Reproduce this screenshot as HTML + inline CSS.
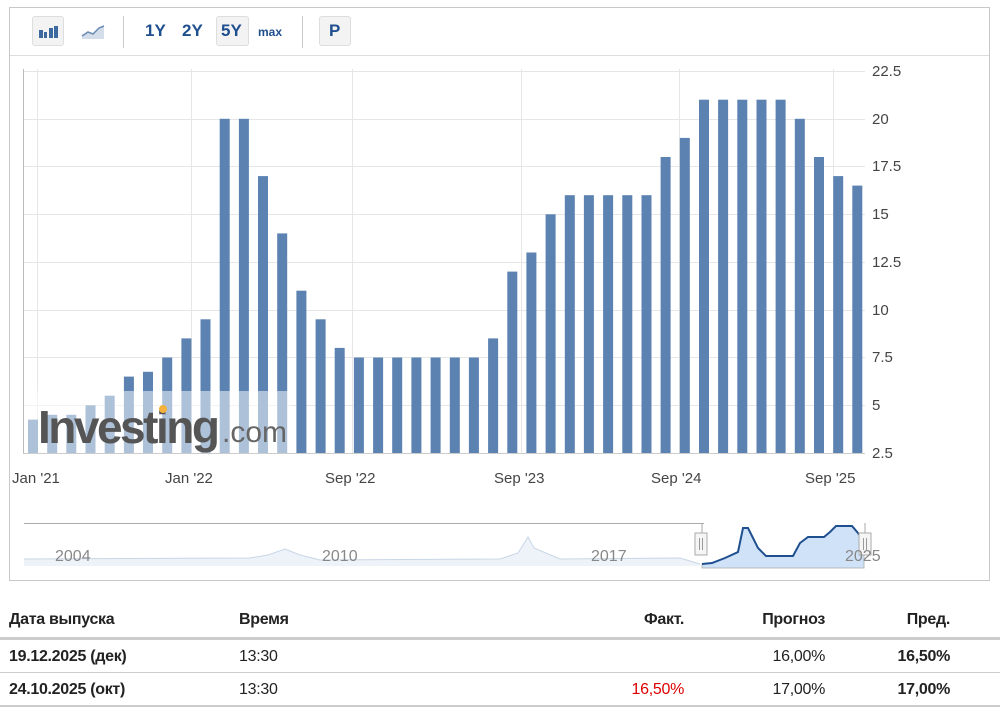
<!DOCTYPE html>
<html><head><meta charset="utf-8"><style>
body{margin:0;background:#fff;font-family:"Liberation Sans",Arial,sans-serif;width:1000px;height:712px;overflow:hidden;position:relative}
.box{position:absolute;left:9px;top:7px;width:981px;height:574px;border:1px solid #c8c8c8;box-sizing:border-box}
.tb{position:absolute;left:0;top:0;width:100%;height:47px;border-bottom:1px solid #ddd}
.btn{position:absolute;top:8px;height:30px;box-sizing:border-box;border:1px solid #ddd;border-radius:3px;background:#f3f3f3}
.t{position:absolute;top:13px;font-weight:bold;color:#1f4f8f;font-size:17px}
.sep{position:absolute;top:8px;width:1px;height:32px;background:#ccc}
.c{position:absolute;font-size:16px;color:#222;white-space:nowrap;letter-spacing:-0.3px}
.r{text-align:right}
.hl{position:absolute;left:0;width:1000px;background:#ccc}
</style></head><body>
<div class="box">
 <div class="tb">
  <div class="btn" style="left:22px;width:32px"></div>
  <svg style="position:absolute;left:27px;top:15px" width="24" height="16"><g fill="#3d6a9e"><rect x="2" y="7" width="4" height="8"/><rect x="7" y="9" width="3" height="6"/><rect x="12" y="5" width="4" height="10"/><rect x="17" y="3" width="4" height="12"/></g></svg>
  <svg style="position:absolute;left:70px;top:14px" width="26" height="18"><path d="M2 14 L8 10 L13 12 L19 6 L24 4 L24 17 L2 17Z" fill="#d3deea"/><path d="M2 14 L8 10 L13 12 L19 6 L24 4" stroke="#6a8cb3" stroke-width="1.5" fill="none"/></svg>
  <div class="sep" style="left:113px"></div>
  <div class="t" style="left:135px">1Y</div>
  <div class="t" style="left:172px">2Y</div>
  <div class="btn" style="left:206px;width:33px"></div>
  <div class="t" style="left:211px">5Y</div>
  <div class="t" style="left:248px;font-size:12px;top:17px">max</div>
  <div class="sep" style="left:292px"></div>
  <div class="btn" style="left:309px;width:32px"></div>
  <div class="t" style="left:319px">P</div>
 </div>
</div>
<svg style="position:absolute;left:0;top:0" width="1000" height="600" font-family="Liberation Sans,Arial,sans-serif">
 <g stroke="#e6e6e6" stroke-width="1">
  <line x1="23" x2="865" y1="71.5" y2="71.5"/><line x1="23" x2="865" y1="119.5" y2="119.5"/><line x1="23" x2="865" y1="166.5" y2="166.5"/><line x1="23" x2="865" y1="214.5" y2="214.5"/><line x1="23" x2="865" y1="262.5" y2="262.5"/><line x1="23" x2="865" y1="310.5" y2="310.5"/><line x1="23" x2="865" y1="357.5" y2="357.5"/><line x1="23" x2="865" y1="405.5" y2="405.5"/>
  <line x1="37.5" x2="37.5" y1="69" y2="453"/><line x1="191.5" x2="191.5" y1="69" y2="453"/><line x1="352.5" x2="352.5" y1="69" y2="453"/><line x1="521.5" x2="521.5" y1="69" y2="453"/><line x1="679.5" x2="679.5" y1="69" y2="453"/><line x1="833.5" x2="833.5" y1="69" y2="453"/>
 </g>
 <line x1="23.5" x2="23.5" y1="69" y2="453" stroke="#bbb"/>
 <line x1="23" x2="865" y1="453.5" y2="453.5" stroke="#ccc"/>
 <g fill="#5b82b1">
<rect x="28" y="419.6" width="10" height="33.4"/><rect x="47.2" y="414.8" width="10" height="38.2"/><rect x="66.3" y="414.8" width="10" height="38.2"/><rect x="85.5" y="405.3" width="10" height="47.7"/><rect x="104.7" y="395.7" width="10" height="57.3"/><rect x="123.9" y="376.6" width="10" height="76.4"/><rect x="143" y="371.8" width="10" height="81.2"/><rect x="162.2" y="357.5" width="10" height="95.5"/><rect x="181.4" y="338.4" width="10" height="114.6"/><rect x="200.5" y="319.3" width="10" height="133.7"/><rect x="219.7" y="118.8" width="10" height="334.2"/><rect x="238.9" y="118.8" width="10" height="334.2"/><rect x="258" y="176.1" width="10" height="276.9"/><rect x="277.2" y="233.4" width="10" height="219.6"/><rect x="296.4" y="290.7" width="10" height="162.3"/><rect x="315.6" y="319.3" width="10" height="133.7"/><rect x="334.7" y="347.9" width="10" height="105.1"/><rect x="353.9" y="357.5" width="10" height="95.5"/><rect x="373.1" y="357.5" width="10" height="95.5"/><rect x="392.2" y="357.5" width="10" height="95.5"/><rect x="411.4" y="357.5" width="10" height="95.5"/><rect x="430.6" y="357.5" width="10" height="95.5"/><rect x="449.8" y="357.5" width="10" height="95.5"/><rect x="468.9" y="357.5" width="10" height="95.5"/><rect x="488.1" y="338.4" width="10" height="114.6"/><rect x="507.3" y="271.6" width="10" height="181.4"/><rect x="526.4" y="252.5" width="10" height="200.5"/><rect x="545.6" y="214.3" width="10" height="238.7"/><rect x="564.8" y="195.2" width="10" height="257.8"/><rect x="583.9" y="195.2" width="10" height="257.8"/><rect x="603.1" y="195.2" width="10" height="257.8"/><rect x="622.3" y="195.2" width="10" height="257.8"/><rect x="641.5" y="195.2" width="10" height="257.8"/><rect x="660.6" y="157" width="10" height="296"/><rect x="679.8" y="137.9" width="10" height="315.1"/><rect x="699" y="99.7" width="10" height="353.3"/><rect x="718.1" y="99.7" width="10" height="353.3"/><rect x="737.3" y="99.7" width="10" height="353.3"/><rect x="756.5" y="99.7" width="10" height="353.3"/><rect x="775.6" y="99.7" width="10" height="353.3"/><rect x="794.8" y="118.8" width="10" height="334.2"/><rect x="814" y="157" width="10" height="296"/><rect x="833.2" y="176.1" width="10" height="276.9"/><rect x="852.3" y="185.6" width="10" height="267.4"/>
 </g>
 <rect x="24" y="391" width="267" height="62" fill="#fff" opacity="0.5"/>
 <text x="38" y="443" font-size="46" font-weight="bold" fill="#555" letter-spacing="-2.5">Investing</text>
 <circle cx="163" cy="409" r="4" fill="#f4b23c"/>
 <text x="222" y="442" font-size="30" fill="#666">.com</text>
 <g font-size="15" fill="#444">
  <text x="872" y="76">22.5</text><text x="872" y="124">20</text><text x="872" y="171">17.5</text><text x="872" y="219">15</text><text x="872" y="267">12.5</text><text x="872" y="315">10</text><text x="872" y="362">7.5</text><text x="872" y="410">5</text><text x="872" y="458">2.5</text>
  <text x="12" y="483">Jan '21</text><text x="165" y="483">Jan '22</text><text x="325" y="483">Sep '22</text><text x="494" y="483">Sep '23</text><text x="651" y="483">Sep '24</text><text x="805" y="483">Sep '25</text>
 </g>
 <line x1="24" x2="704" y1="523.5" y2="523.5" stroke="#aaa"/>
 <path d="M24 559 L250 558 L268 555 L285 549 L300 555 L320 560 L500 559 L518 553 L528 537 L534 548 L560 559 L680 558 L700 564 L700 566 L24 566Z" fill="#eef3f9"/>
 <path d="M24 559 L250 558 L268 555 L285 549 L300 555 L320 560 L500 559 L518 553 L528 537 L534 548 L560 559 L680 558 L700 564" stroke="#c8d6e6" fill="none"/>
 <path d="M702 568 L702 564 L712 563 L725 558 L738 552 L743 528 L748 528 L758 548 L766 556 L793 556 L800 543 L808 537 L824 537 L830 532 L836 526 L852 526 L858 533 L864 542 L864 568Z" fill="#cfe2f8" stroke="#aaa" stroke-width="0.8"/>
 <path d="M702 564 L712 563 L725 558 L738 552 L743 528 L748 528 L758 548 L766 556 L793 556 L800 543 L808 537 L824 537 L830 532 L836 526 L852 526 L858 533 L864 542" stroke="#1f4f8f" stroke-width="2" fill="none"/>
 <line x1="702" x2="702" y1="523" y2="534" stroke="#aaa"/>
 <rect x="695" y="533" width="12" height="22" fill="#f5f5f5" stroke="#aaa"/><line x1="699.5" x2="699.5" y1="538" y2="550" stroke="#999"/><line x1="702.5" x2="702.5" y1="538" y2="550" stroke="#999"/>
 <line x1="865" x2="865" y1="523" y2="534" stroke="#aaa"/>
 <rect x="859" y="533" width="12" height="22" fill="#f5f5f5" stroke="#aaa"/><line x1="863.5" x2="863.5" y1="538" y2="550" stroke="#999"/><line x1="866.5" x2="866.5" y1="538" y2="550" stroke="#999"/>
 <g font-size="16" fill="#888"><text x="55" y="561">2004</text><text x="322" y="561">2010</text><text x="591" y="561">2017</text><text x="845" y="561">2025</text></g>
</svg>
<div class="c" style="left:9px;top:611px;font-weight:bold">Дата выпуска</div>
<div class="c" style="left:239px;top:611px;font-weight:bold">Время</div>
<div class="c r" style="right:316px;top:611px;font-weight:bold">Факт.</div>
<div class="c r" style="right:175px;top:611px;font-weight:bold">Прогноз</div>
<div class="c r" style="right:50px;top:611px;font-weight:bold">Пред.</div>
<div class="hl" style="top:637px;height:3px"></div>
<div class="c" style="left:9px;top:648px;font-weight:bold">19.12.2025 (дек)</div>
<div class="c" style="left:239px;top:648px">13:30</div>
<div class="c r" style="right:175px;top:648px">16,00%</div>
<div class="c r" style="right:50px;top:648px;font-weight:bold">16,50%</div>
<div class="hl" style="top:672px;height:1px"></div>
<div class="c" style="left:9px;top:681px;font-weight:bold">24.10.2025 (окт)</div>
<div class="c" style="left:239px;top:681px">13:30</div>
<div class="c r" style="right:316px;top:681px;color:#d00">16,50%</div>
<div class="c r" style="right:175px;top:681px">17,00%</div>
<div class="c r" style="right:50px;top:681px;font-weight:bold">17,00%</div>
<div class="hl" style="top:705px;height:2px"></div>
</body></html>
